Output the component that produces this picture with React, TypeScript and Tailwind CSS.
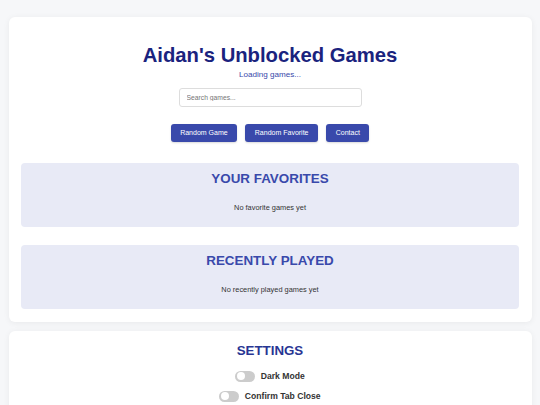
import React from "react";

function Toggle() {
  return (
    <span className="relative inline-block w-[20px] h-[11px] rounded-full bg-[#cccccc]">
      <span className="absolute left-[1.5px] top-[1.5px] w-[8px] h-[8px] rounded-full bg-white" />
    </span>
  );
}

function Section({ title, empty }: { title: string; empty: string }) {
  return (
    <section className="bg-[#e8eaf6] rounded-[4px] h-[64px] pt-[7.5px]">
      <h2 className="text-center text-[13.4px] leading-[15px] font-bold text-[#3949ab] uppercase">{title}</h2>
      <p className="text-center text-[7.4px] leading-[10px] text-[#333333] mt-[17.5px]">{empty}</p>
    </section>
  );
}

export default function App() {
  return (
    <div className="min-h-screen bg-[#f6f7f9] pt-[16.5px] px-[8.5px] font-['Liberation_Sans',Arial,sans-serif]">
      <div className="bg-white rounded-[6px] shadow-[0_1px_6px_rgba(0,0,0,0.06)] px-[12.5px] pt-[27px] pb-[12.5px]">
        <h1 className="text-center text-[20.25px] leading-[23px] font-bold text-[#1a237e]">Aidan's Unblocked Games</h1>
        <p className="text-center text-[8.1px] leading-[10px] text-[#3949ab] mt-[3px]">Loading games...</p>
        <div className="flex justify-center mt-[8.5px]">
          <input
            placeholder="Search games..."
            className="w-[183px] h-[19px] border border-[#dddddd] rounded-[3px] px-[7px] text-[6.75px] outline-none placeholder:text-[#757575]"
          />
        </div>
        <div className="flex justify-center gap-[8px] mt-[17px]">
          {["Random Game", "Random Favorite", "Contact"].map((b) => (
            <button
              key={b}
              className="h-[18px] px-[9.6px] bg-[#3949ab] text-white text-[7px] rounded-[3px] shadow-[0_1px_2px_rgba(0,0,0,0.15)]"
            >
              {b}
            </button>
          ))}
        </div>
        <div className="mt-[21px] flex flex-col gap-[18px]">
          <Section title="Your Favorites" empty="No favorite games yet" />
          <Section title="Recently Played" empty="No recently played games yet" />
        </div>
      </div>
      <div className="mt-[9px] bg-white rounded-[6px] shadow-[0_1px_6px_rgba(0,0,0,0.06)] px-[12.5px] pt-[12.5px] pb-[20px]">
        <h2 className="text-center text-[13.3px] leading-[15px] font-bold text-[#283593]">SETTINGS</h2>
        <div className="mt-[12px] flex flex-col items-center gap-[8px]">
          <label className="flex items-center gap-[5.5px] h-[12px]">
            <Toggle />
            <span className="text-[8.6px] font-bold text-[#333333]">Dark Mode</span>
          </label>
          <label className="flex items-center gap-[5.5px] h-[12px]">
            <Toggle />
            <span className="text-[8.6px] font-bold text-[#333333]">Confirm Tab Close</span>
          </label>
        </div>
      </div>
    </div>
  );
}
